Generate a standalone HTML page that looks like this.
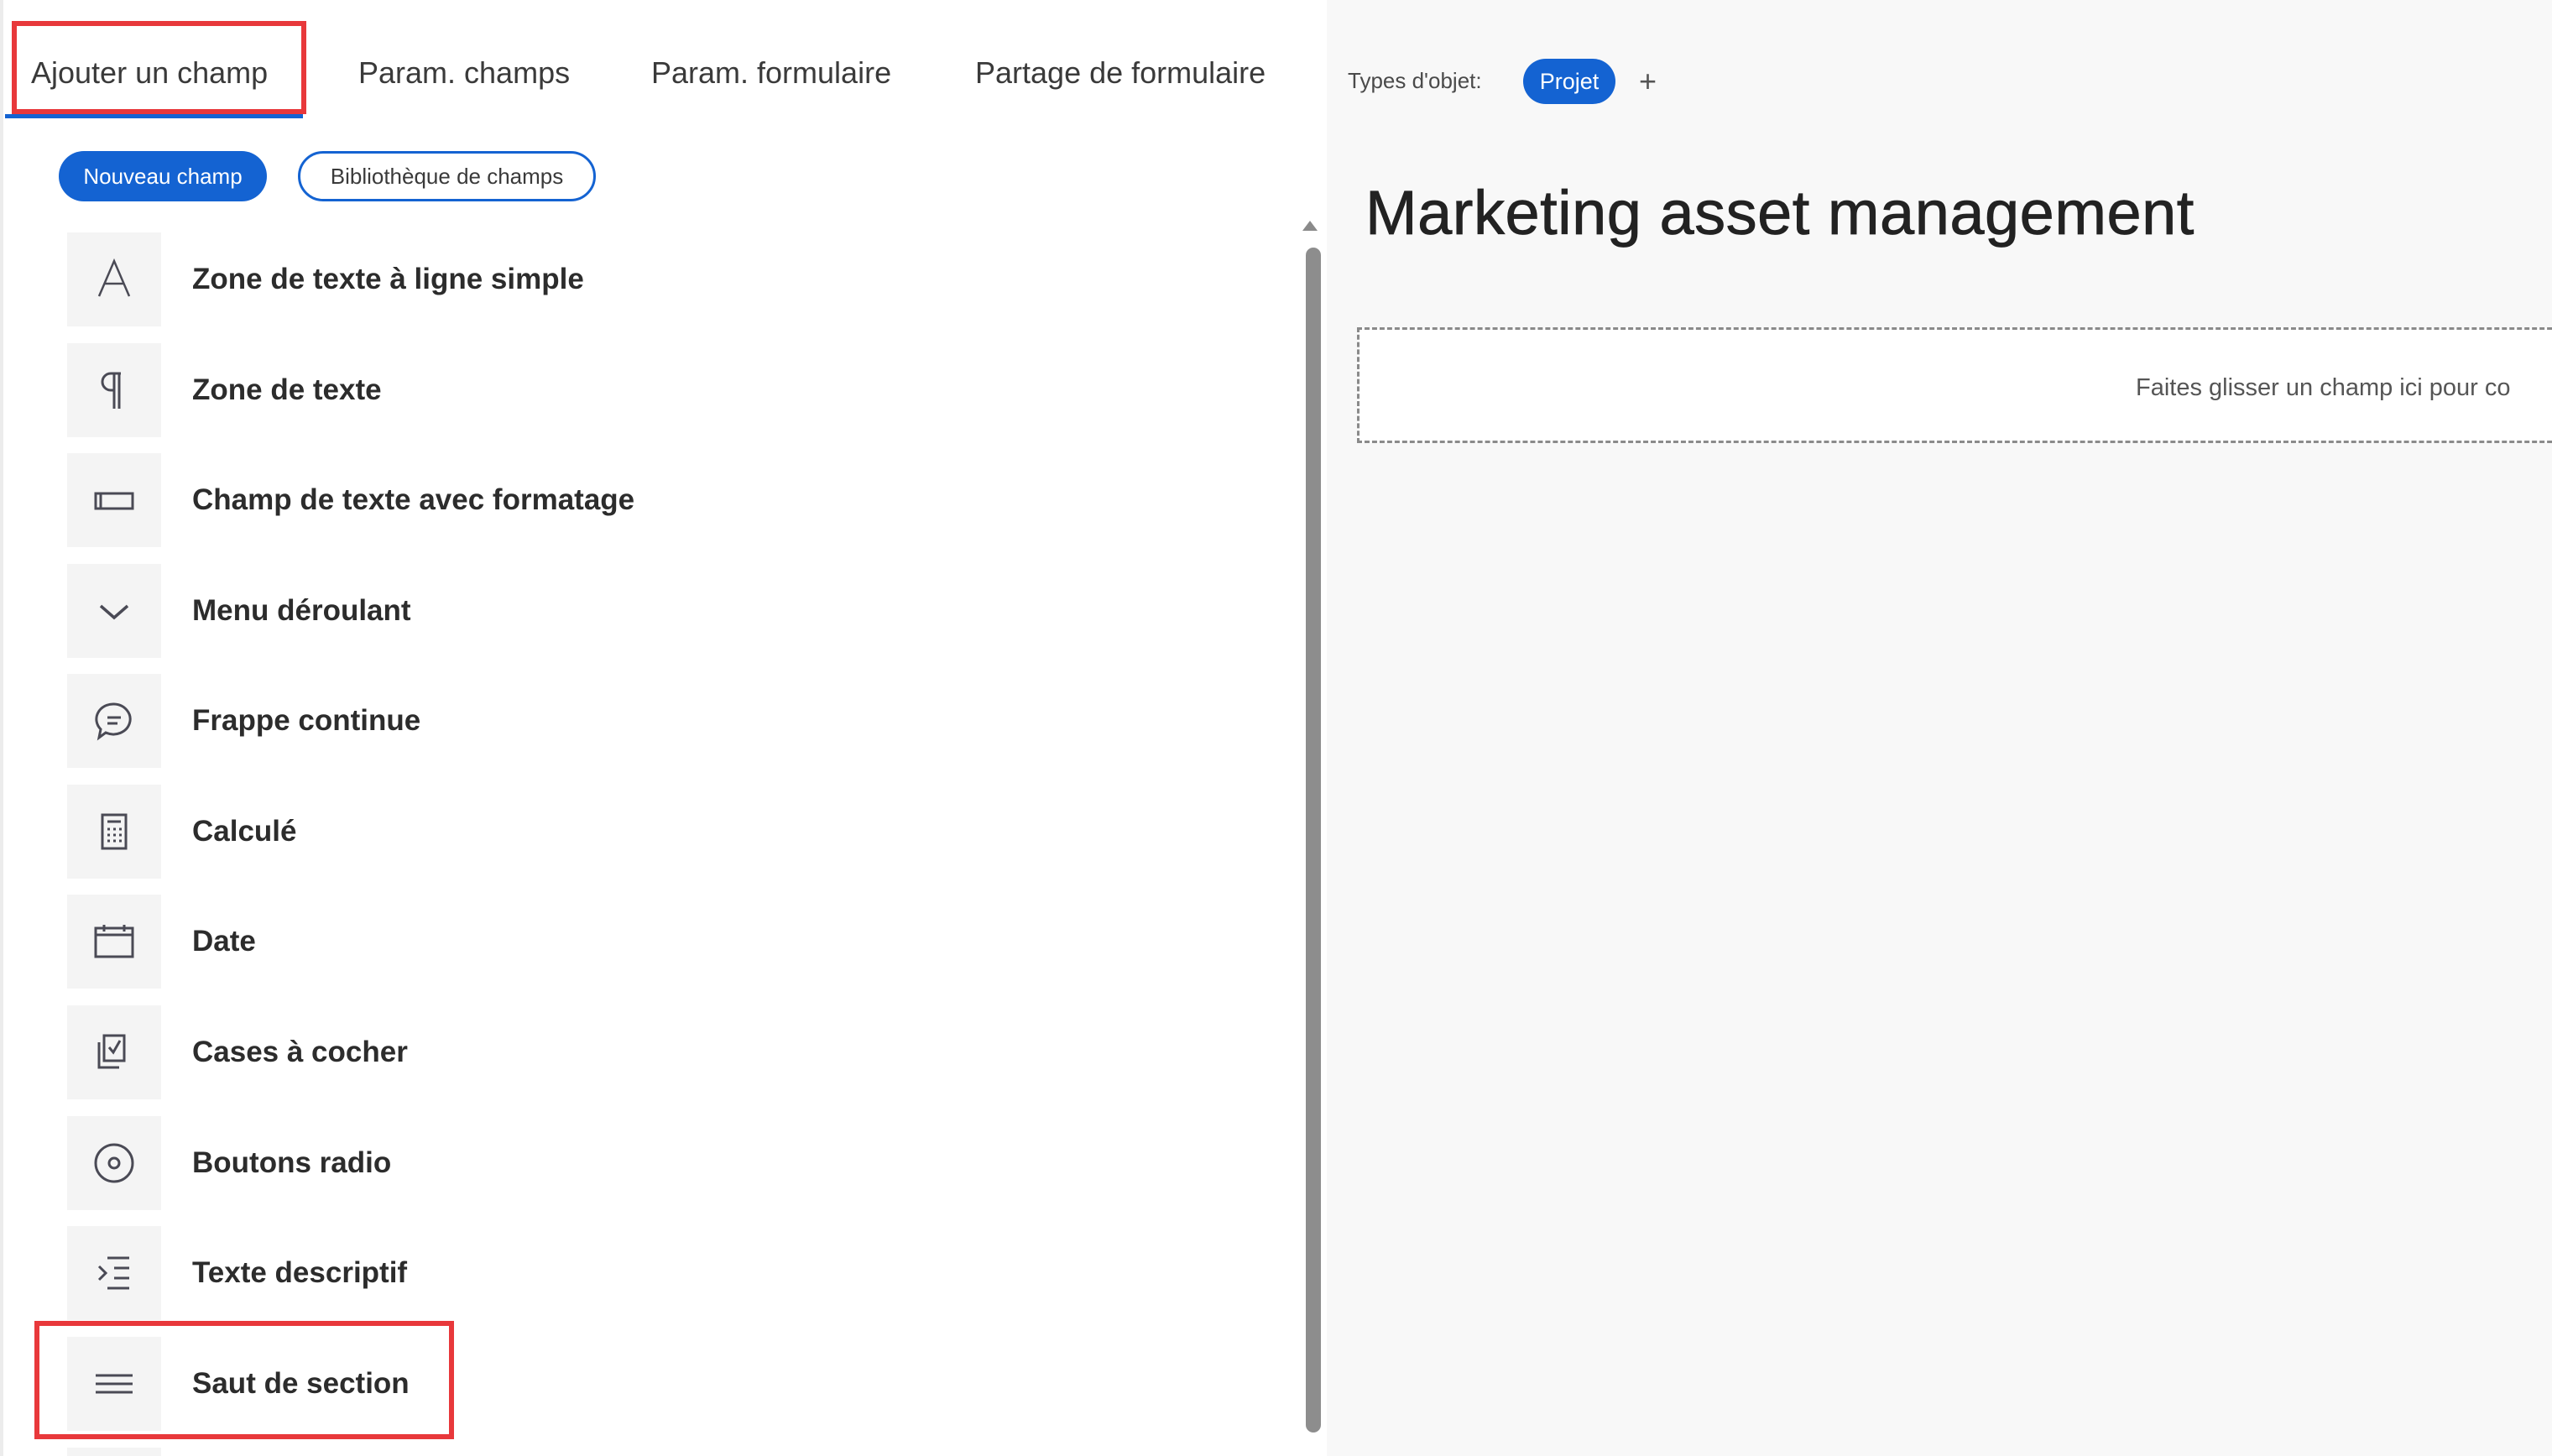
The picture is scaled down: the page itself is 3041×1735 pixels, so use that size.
<!DOCTYPE html>
<html><head><meta charset="utf-8"><style>
*{margin:0;padding:0;box-sizing:border-box}
html,body{width:3041px;height:1735px;overflow:hidden}
body{background:#f8f8f8;font-family:"Liberation Sans",sans-serif;position:relative}
.left{position:absolute;left:0;top:0;width:1581px;height:1735px;background:#fff;border-left:4px solid #ececec;overflow:hidden}
.abs{position:absolute}
.tab{position:absolute;top:66px;font-size:36px;color:#3a3a3a;white-space:nowrap}
.btn{position:absolute;top:180px;height:60px;border-radius:30px;font-size:26px;display:flex;align-items:center;justify-content:center}
.row{position:absolute;left:76px;height:112px;width:900px}
.ib{position:absolute;left:0;top:0;width:112px;height:112px;background:#f4f4f4;display:flex;align-items:center;justify-content:center}
.rt{position:absolute;left:149px;top:0;line-height:112px;font-size:35px;font-weight:bold;color:#2c2c2c;white-space:nowrap}
svg{stroke:#4a4a55;fill:none;stroke-width:3}
.red{position:absolute;border:6px solid #e8383b}
</style></head><body>
<div class="left">
<div class="tab" style="left:33px">Ajouter un champ</div>
<div class="tab" style="left:423px">Param. champs</div>
<div class="tab" style="left:772px">Param. formulaire</div>
<div class="tab" style="left:1158px">Partage de formulaire</div>
<div class="abs" style="left:2px;top:136px;width:355px;height:5px;background:#1463d2"></div>
<div class="red" style="left:10px;top:25px;width:351px;height:111px"></div>
<div class="btn" style="left:66px;width:248px;background:#1463d2;color:#fff">Nouveau champ</div>
<div class="btn" style="left:351px;width:355px;border:3px solid #1463d2;color:#3a3a3a">Bibliothèque de champs</div>

<div class="row" style="top:277px"><div class="ib"><svg width="60" height="60" viewBox="0 0 60 60"><path d="M12 50L30 8L48 50M19 35H41" stroke-width="2.5"/></svg></div><div class="rt">Zone de texte à ligne simple</div></div>
<div class="row" style="top:409px"><div class="ib"><svg width="60" height="60" viewBox="0 0 60 60"><path d="M36 10V52M30 10V52M38 10H26a10 10 0 0 0 0 20h4"/></svg></div><div class="rt">Zone de texte</div></div>
<div class="row" style="top:540px"><div class="ib"><svg width="60" height="60" viewBox="0 0 60 60"><rect x="8" y="22" width="44" height="18"/><path d="M14 22V40"/></svg></div><div class="rt">Champ de texte avec formatage</div></div>
<div class="row" style="top:672px"><div class="ib"><svg width="60" height="60" viewBox="0 0 60 60"><path d="M14 24L30 38L46 24" stroke-width="3.5"/></svg></div><div class="rt">Menu déroulant</div></div>
<div class="row" style="top:803px"><div class="ib"><svg width="60" height="60" viewBox="0 0 60 60"><path d="M30 10a20 18 0 1 1-10 34l-8 6 2-10A20 18 0 0 1 30 10zM22 26h16M22 33h12"/></svg></div><div class="rt">Frappe continue</div></div>
<div class="row" style="top:935px"><div class="ib"><svg width="60" height="60" viewBox="0 0 60 60"><rect x="16" y="10" width="28" height="40"/><path d="M22 18h16M22 27h3M29 27h3M36 27h3M22 34h3M29 34h3M36 34h3M22 41h3M29 41h3M36 41h3"/></svg></div><div class="rt">Calculé</div></div>
<div class="row" style="top:1066px"><div class="ib"><svg width="60" height="60" viewBox="0 0 60 60"><rect x="8" y="14" width="44" height="34"/><path d="M8 22h44M18 10v8M42 10v8"/></svg></div><div class="rt">Date</div></div>
<div class="row" style="top:1198px"><div class="ib"><svg width="60" height="60" viewBox="0 0 60 60"><rect x="18" y="10" width="24" height="30"/><path d="M12 18v30h24M24 24l5 6 8-14"/></svg></div><div class="rt">Cases à cocher</div></div>
<div class="row" style="top:1330px"><div class="ib"><svg width="60" height="60" viewBox="0 0 60 60"><circle cx="30" cy="30" r="22"/><circle cx="30" cy="30" r="6"/></svg></div><div class="rt">Boutons radio</div></div>
<div class="row" style="top:1461px"><div class="ib"><svg width="60" height="60" viewBox="0 0 60 60"><path d="M22 12h26M30 24h18M30 36h18M22 48h26M12 22l8 8-8 8"/></svg></div><div class="rt">Texte descriptif</div></div>
<div class="row" style="top:1593px"><div class="ib"><svg width="60" height="60" viewBox="0 0 60 60"><path d="M8 20h44M8 30h44M8 40h44"/></svg></div><div class="rt">Saut de section</div></div>
<div class="abs" style="left:76px;top:1725px;width:112px;height:10px;background:#f4f4f4"></div>
<div class="red" style="left:37px;top:1574px;width:500px;height:141px"></div>

<div class="abs" style="left:1548px;top:263px;width:0;height:0;border-left:9px solid transparent;border-right:9px solid transparent;border-bottom:12px solid #8a8a8a"></div>
<div class="abs" style="left:1552px;top:295px;width:18px;height:1412px;background:#8d8d8d;border-radius:9px"></div>
</div>

<div class="abs" style="left:1606px;top:81px;font-size:26px;color:#4a4a4a">Types d'objet:</div>
<div class="abs" style="left:1815px;top:70px;width:110px;height:54px;border-radius:27px;background:#1463d2;color:#fff;font-size:27px;display:flex;align-items:center;justify-content:center">Projet</div>
<div class="abs" style="left:1953px;top:76px;font-size:36px;color:#555">+</div>
<div class="abs" style="left:1627px;top:211px;font-size:74px;letter-spacing:0.5px;color:#222;white-space:nowrap;-webkit-text-stroke:0.8px #222">Marketing asset management</div>
<div class="abs" style="left:1617px;top:390px;width:1460px;height:138px;border:3px dashed #8a8a8a;background:#fff"></div>
<div class="abs" style="left:2545px;top:446px;font-size:29px;color:#555;white-space:nowrap">Faites glisser un champ ici pour co</div>
</body></html>
